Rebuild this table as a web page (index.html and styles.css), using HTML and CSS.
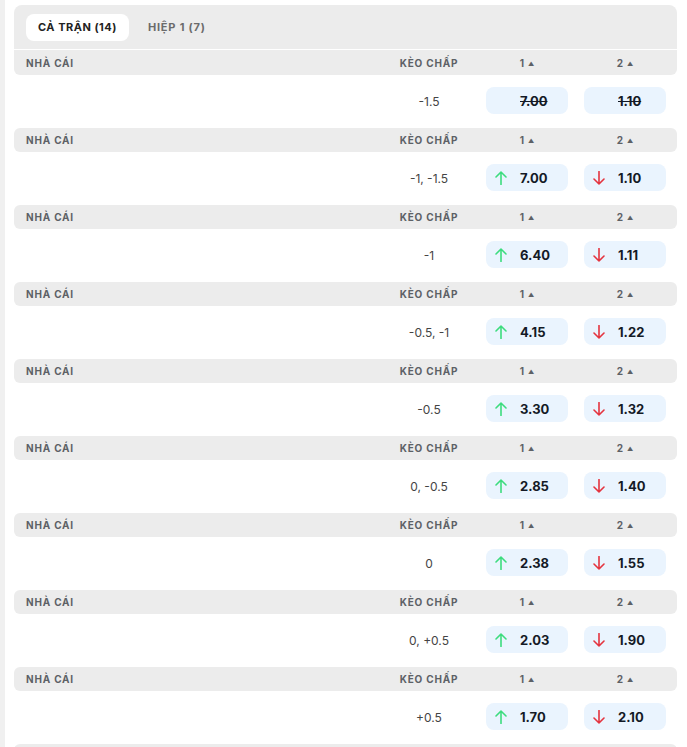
FILE: index.html
```html
<!DOCTYPE html>
<html lang="vi">
<head>
<meta charset="utf-8">
<link rel="stylesheet" href="styles.css">
</head>
<body>
<div class="panel">
  <div class="tabs">
    <div class="tab active">CẢ TRẬN (14)</div>
    <div class="tab">HIỆP 1 (7)</div>
  </div>

  <div class="group">
    <div class="head first"><span class="c-name">NHÀ CÁI</span><span class="c">KÈO CHẤP</span><span class="c">1 <i class="tri">▲</i></span><span class="c">2 <i class="tri">▲</i></span></div>
    <div class="row"><span></span><span class="hc">-1.5</span>
      <div class="odd strike"><svg class="arr hide" viewBox="0 0 12 14"></svg><b>7.00</b></div>
      <div class="odd strike"><svg class="arr hide" viewBox="0 0 12 14"></svg><b>1.10</b></div>
    </div>
  </div>

  <div class="group">
    <div class="head"><span class="c-name">NHÀ CÁI</span><span class="c">KÈO CHẤP</span><span class="c">1 <i class="tri">▲</i></span><span class="c">2 <i class="tri">▲</i></span></div>
    <div class="row"><span></span><span class="hc">-1, -1.5</span>
      <div class="odd"><svg class="arr up" viewBox="0 0 12 14"><path d="M6 13.5V1M1 6l5-5 5 5"/></svg><b>7.00</b></div>
      <div class="odd"><svg class="arr down" viewBox="0 0 12 14"><path d="M6 0.5V13M1 8l5 5 5-5"/></svg><b>1.10</b></div>
    </div>
  </div>

  <div class="group">
    <div class="head"><span class="c-name">NHÀ CÁI</span><span class="c">KÈO CHẤP</span><span class="c">1 <i class="tri">▲</i></span><span class="c">2 <i class="tri">▲</i></span></div>
    <div class="row"><span></span><span class="hc">-1</span>
      <div class="odd"><svg class="arr up" viewBox="0 0 12 14"><path d="M6 13.5V1M1 6l5-5 5 5"/></svg><b>6.40</b></div>
      <div class="odd"><svg class="arr down" viewBox="0 0 12 14"><path d="M6 0.5V13M1 8l5 5 5-5"/></svg><b>1.11</b></div>
    </div>
  </div>

  <div class="group">
    <div class="head"><span class="c-name">NHÀ CÁI</span><span class="c">KÈO CHẤP</span><span class="c">1 <i class="tri">▲</i></span><span class="c">2 <i class="tri">▲</i></span></div>
    <div class="row"><span></span><span class="hc">-0.5, -1</span>
      <div class="odd"><svg class="arr up" viewBox="0 0 12 14"><path d="M6 13.5V1M1 6l5-5 5 5"/></svg><b>4.15</b></div>
      <div class="odd"><svg class="arr down" viewBox="0 0 12 14"><path d="M6 0.5V13M1 8l5 5 5-5"/></svg><b>1.22</b></div>
    </div>
  </div>

  <div class="group">
    <div class="head"><span class="c-name">NHÀ CÁI</span><span class="c">KÈO CHẤP</span><span class="c">1 <i class="tri">▲</i></span><span class="c">2 <i class="tri">▲</i></span></div>
    <div class="row"><span></span><span class="hc">-0.5</span>
      <div class="odd"><svg class="arr up" viewBox="0 0 12 14"><path d="M6 13.5V1M1 6l5-5 5 5"/></svg><b>3.30</b></div>
      <div class="odd"><svg class="arr down" viewBox="0 0 12 14"><path d="M6 0.5V13M1 8l5 5 5-5"/></svg><b>1.32</b></div>
    </div>
  </div>

  <div class="group">
    <div class="head"><span class="c-name">NHÀ CÁI</span><span class="c">KÈO CHẤP</span><span class="c">1 <i class="tri">▲</i></span><span class="c">2 <i class="tri">▲</i></span></div>
    <div class="row"><span></span><span class="hc">0, -0.5</span>
      <div class="odd"><svg class="arr up" viewBox="0 0 12 14"><path d="M6 13.5V1M1 6l5-5 5 5"/></svg><b>2.85</b></div>
      <div class="odd"><svg class="arr down" viewBox="0 0 12 14"><path d="M6 0.5V13M1 8l5 5 5-5"/></svg><b>1.40</b></div>
    </div>
  </div>

  <div class="group">
    <div class="head"><span class="c-name">NHÀ CÁI</span><span class="c">KÈO CHẤP</span><span class="c">1 <i class="tri">▲</i></span><span class="c">2 <i class="tri">▲</i></span></div>
    <div class="row"><span></span><span class="hc">0</span>
      <div class="odd"><svg class="arr up" viewBox="0 0 12 14"><path d="M6 13.5V1M1 6l5-5 5 5"/></svg><b>2.38</b></div>
      <div class="odd"><svg class="arr down" viewBox="0 0 12 14"><path d="M6 0.5V13M1 8l5 5 5-5"/></svg><b>1.55</b></div>
    </div>
  </div>

  <div class="group">
    <div class="head"><span class="c-name">NHÀ CÁI</span><span class="c">KÈO CHẤP</span><span class="c">1 <i class="tri">▲</i></span><span class="c">2 <i class="tri">▲</i></span></div>
    <div class="row"><span></span><span class="hc">0, +0.5</span>
      <div class="odd"><svg class="arr up" viewBox="0 0 12 14"><path d="M6 13.5V1M1 6l5-5 5 5"/></svg><b>2.03</b></div>
      <div class="odd"><svg class="arr down" viewBox="0 0 12 14"><path d="M6 0.5V13M1 8l5 5 5-5"/></svg><b>1.90</b></div>
    </div>
  </div>

  <div class="group">
    <div class="head"><span class="c-name">NHÀ CÁI</span><span class="c">KÈO CHẤP</span><span class="c">1 <i class="tri">▲</i></span><span class="c">2 <i class="tri">▲</i></span></div>
    <div class="row"><span></span><span class="hc">+0.5</span>
      <div class="odd"><svg class="arr up" viewBox="0 0 12 14"><path d="M6 13.5V1M1 6l5-5 5 5"/></svg><b>1.70</b></div>
      <div class="odd"><svg class="arr down" viewBox="0 0 12 14"><path d="M6 0.5V13M1 8l5 5 5-5"/></svg><b>2.10</b></div>
    </div>
  </div>

  <div class="head"></div>
</div>
</body>
</html>
```

FILE: styles.css
```css
html, body {
  margin: 0;
  padding: 0;
}
body {
  background: #f0f0f0;
  font-family: Inter, "Noto Sans", "DejaVu Sans", sans-serif;
  color: #222;
  height: 747px;
  overflow: hidden;
}
.panel {
  margin-left: 5px;
  background: #ffffff;
  padding: 5px 10px 0 9px;
  height: 747px;
  overflow: hidden;
  box-sizing: border-box;
}
.tabs {
  background: #ececec;
  border-radius: 8px 8px 0 0;
  height: 44px;
  border-bottom: 1px solid #ffffff;
  display: flex;
  align-items: center;
  padding-left: 12px;
  gap: 7px;
}
.tab {
  font-size: 11px;
  font-weight: 700;
  letter-spacing: 0.8px;
  color: #6b6b6b;
  padding: 0 12px;
  height: 27px;
  line-height: 27px;
  border-radius: 8px;
}
.tab.active {
  background: #ffffff;
  color: #222222;
  letter-spacing: 0.5px;
}
.head {
  display: grid;
  grid-template-columns: 1fr 82px 82px 82px;
  column-gap: 16px;
  align-items: center;
  height: 24px;
  background: #ececec;
  border-radius: 6px;
  padding: 0 11px 0 12px;
  font-size: 10px;
  font-weight: 700;
  letter-spacing: 0.8px;
  color: #5d6166;
}
.head.first {
  height: 25px;
  border-radius: 0 0 6px 6px;
}
.head .c {
  text-align: center;
}
.tri {
  font-style: normal;
  font-size: 6px;
  position: relative;
  top: -1px;
  letter-spacing: 0;
}
.row {
  display: grid;
  grid-template-columns: 1fr 82px 82px 82px;
  column-gap: 16px;
  align-items: center;
  height: 53px;
  padding: 0 11px 0 12px;
}
.hc {
  text-align: center;
  font-size: 12px;
  color: #444;
}
.odd {
  height: 27px;
  background: #eaf4fe;
  border-radius: 8px;
  display: flex;
  align-items: center;
  padding-left: 9px;
  gap: 13px;
  position: relative;
  top: -1px;
}
.odd b {
  font-size: 13px;
  font-weight: 700;
  color: #141a26;
}
.odd.strike b {
  text-decoration: line-through;
  text-decoration-thickness: 1px;
}
.arr {
  width: 12px;
  height: 14px;
  flex: none;
  fill: none;
  stroke-width: 1.6;
  stroke-linecap: round;
  stroke-linejoin: round;
}
.arr.up { stroke: #3ddc7e; }
.arr.down { stroke: #e4343f; }
.arr.hide { visibility: hidden; }
```
